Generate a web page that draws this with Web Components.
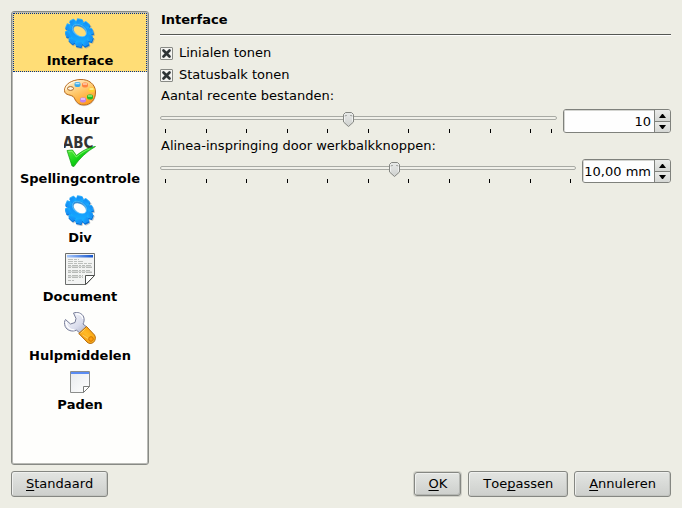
<!DOCTYPE html>
<html lang="nl">
<head>
<meta charset="utf-8">
<title>Instellingen</title>
<style>
html, body { margin: 0; }
body { background: #edede4; color: #000; font: 13px/16px "DejaVu Sans", sans-serif; font-kerning: none; }
</style>
</head>
<body>
<settings-dialog></settings-dialog>

<template id="t-dialog">
  <style>
    :host { display: flex; flex-direction: column; gap: 6px; min-height: 100vh; box-sizing: border-box; padding: 11px; }
    main { flex: 1; display: grid; grid-template-columns: 138px minmax(0, 1fr); gap: 11px; }
    footer { display: flex; gap: 6px; align-items: center; }
    .fill { flex: 1; }
    h1 { margin: 0 0 10px; padding: 1px 1px 6px; font-size: 13px; line-height: 16px; border-bottom: 1px solid #555753; box-shadow: 0 1px #fff; }
    .checks { display: grid; gap: 6px; margin-bottom: 5px; }
  </style>
  <main>
    <page-list>
      <page-item icon="gear" selected>Interface</page-item>
      <page-item icon="palette">Kleur</page-item>
      <page-item icon="spelling">Spellingcontrole</page-item>
      <page-item icon="gear">Div</page-item>
      <page-item icon="document">Document</page-item>
      <page-item icon="wrench">Hulpmiddelen</page-item>
      <page-item icon="folder">Paden</page-item>
    </page-list>
    <section>
      <h1>Interface</h1>
      <div class="checks">
        <check-option>Linialen tonen</check-option>
        <check-option>Statusbalk tonen</check-option>
      </div>
      <number-setting label="Aantal recente bestanden:" min="1" max="20" value="10" text="10" field="108" ticks="2,2,2,2,2,2,2,2,2,1"></number-setting>
      <number-setting label="Alinea-inspringing door werkbalkknoppen:" min="0" max="17.7" value="10" text="10,00 mm" field="89" ticks="1,1,1,1,1,1,1,1,1,1"></number-setting>
    </section>
  </main>
  <footer>
    <push-button><u>S</u>tandaard</push-button>
    <span class="fill"></span>
    <push-button kind="default"><u>O</u>K</push-button>
    <push-button>Toe<u>p</u>assen</push-button>
    <push-button><u>A</u>nnuleren</push-button>
  </footer>
</template>

<template id="t-list">
  <style>
    :host { display: block; box-sizing: border-box; background: #fefefc; border: 1px solid #888a85; border-radius: 3px; box-shadow: inset 0 0 0 1px #b9bab5; padding: 1px; }
    nav { display: flex; flex-direction: column; }
  </style>
  <nav><slot></slot></nav>
</template>

<template id="t-item">
  <style>
    :host { display: block; }
    button { display: flex; flex-direction: column; align-items: center; gap: 4px; width: 100%; margin: 0; padding: 4px 0 3px; border: 0; background: none; color: inherit; font: bold 13px/16px "DejaVu Sans", sans-serif; font-kerning: none; white-space: nowrap; }
    :host([selected]) button { background: #ffdd76; outline: 1px dotted #00308c; outline-offset: -1px; }
  </style>
  <button type="button"><page-icon></page-icon><slot></slot></button>
</template>

<template id="t-check">
  <style>
    :host { display: block; }
    label { display: flex; align-items: center; gap: 6px; }
    input { appearance: none; width: 13px; height: 13px; margin: 0; box-sizing: border-box; border: 1px solid #888a85; border-radius: 1px; background: #f8f8f6; }
    input:checked { background: #f4f4f1 url("data:image/svg+xml,%3Csvg xmlns='http://www.w3.org/2000/svg' viewBox='0 0 11 11'%3E%3Cpath d='M2.5 2.5L8.5 8.5M8.5 2.5L2.5 8.5' stroke='%232e3436' stroke-width='2.7' stroke-linecap='round'/%3E%3C/svg%3E"); }
  </style>
  <label><input type="checkbox" checked><span><slot></slot></span></label>
</template>

<template id="t-number">
  <style>
    :host { display: block; margin-bottom: 5px; }
    label { display: block; padding: 0 1px; margin-bottom: 5px; }
    .row { display: flex; gap: 6px; align-items: flex-start; }
    .scale { flex: 1; min-width: 0; padding-top: 2px; }
    .range { appearance: none; display: block; width: 100%; height: 14px; margin: 0; background: none; }
    .range::-webkit-slider-runnable-track { box-sizing: border-box; height: 4px; border: 1px solid #a8aaa4; border-radius: 2px; background: #f0f0e9; }
    .range::-webkit-slider-thumb { appearance: none; width: 11px; height: 15px; margin-top: -5px; border: 0; background: url("data:image/svg+xml,%3Csvg xmlns='http://www.w3.org/2000/svg' viewBox='0 0 11 15'%3E%3Cdefs%3E%3ClinearGradient id='g' x2='0' y2='1'%3E%3Cstop stop-color='%23e8eae8'/%3E%3Cstop offset='1' stop-color='%23cfd1cf'/%3E%3C/linearGradient%3E%3C/defs%3E%3Cpath d='M2.5 .5H8.5L10.5 2.5V10L5.5 14.5L.5 10V2.5Z' fill='url(%23g)' stroke='%23858782'/%3E%3Cpath d='M1.5 9.5V2.5M9.5 2.5V9.5' stroke='%23fff' stroke-opacity='.6'/%3E%3Cpath d='M2 4.5V3.5H4M7 3.5H9V4.5' fill='none' stroke='%23aaaca8'/%3E%3C/svg%3E"); }
    .ticks { display: flex; padding: 4px 5px 0; }
    .ticks i { height: 4px; min-width: 1px; box-sizing: border-box; border-left: 1px solid #000; }
    .ticks i:last-child { flex: 0 0 1px; }
    .spin { box-sizing: border-box; height: 24px; display: flex; border: 1px solid #7f817c; border-radius: 3px; overflow: hidden; background: #fefefe; }
    .spin input { flex: 1; min-width: 0; border: 0; margin: 0; padding: 1px 3px 0 1px; background: none; font: 13px/16px "DejaVu Sans", sans-serif; font-kerning: none; text-align: right; box-shadow: inset 1px 1px #d4d5d1; outline: 0; }
    .arrows { width: 16px; display: grid; grid-template-rows: 1fr 1fr; box-sizing: border-box; border-left: 1px solid #7f817c; }
    .arrows button { display: flex; align-items: center; justify-content: center; margin: 0; padding: 0; border: 0; background: linear-gradient(#eaebe9, #d5d7d4); min-height: 0; }
    .arrows button + button { border-top: 1px solid #7f817c; }
    svg { display: block; width: 7px; height: 4px; }
  </style>
  <label for="field"></label>
  <div class="row">
    <div class="scale">
      <input class="range" type="range" step="any">
      <div class="ticks"></div>
    </div>
    <div class="spin">
      <input id="field" type="text">
      <div class="arrows">
        <button type="button" aria-label="Verhogen"><svg viewBox="0 0 7 4"><path d="M0 4L3 0H4L7 4Z"/></svg></button>
        <button type="button" aria-label="Verlagen"><svg viewBox="0 0 7 4"><path d="M0 0L3 4H4L7 0Z"/></svg></button>
      </div>
    </div>
  </div>
</template>

<template id="t-button">
  <style>
    :host { display: block; }
    button { display: block; box-sizing: border-box; height: 26px; margin: 0; padding: 0 14px; border: 1px solid #858782; border-radius: 3px; background: linear-gradient(#e3e5e2, #cdcfcc); box-shadow: inset 1px 1px #eff0ee, inset -1px -1px #c3c5c1; color: #000; font: 13px/16px "DejaVu Sans", sans-serif; font-kerning: none; white-space: nowrap; }
    :host([kind="default"]) button { height: 24px; margin: 1px; padding: 0 13px; box-shadow: 0 0 0 1px #cfcfc7, inset 1px 1px #eff0ee, inset -1px -1px #b5b7b3; }
    ::slotted(u) { text-decoration: underline; text-decoration-skip-ink: none; text-underline-offset: 2px; }
  </style>
  <button type="button"><slot></slot></button>
</template>

<script>
const teeth = [0, 36, 72, 108, 144, 180, 216, 252, 288, 324]
  .map(a => `<path d="M-3.8 -10L-3 -14.4Q-2.800 -15 -2 -15H2Q2.800 -15 3 -14.400L3.8 -10Z" transform="rotate(${a})"/>`).join('');
const wheel = `<circle r="12.6"/>${teeth}`;

const ICONS = {
  gear: `<svg width="32" height="32" viewBox="0 0 32 32"><defs>
    <linearGradient id="a" x1="0" y1="0" x2="1" y2="1"><stop stop-color="#1689ef"/><stop offset=".55" stop-color="#159bfc"/><stop offset="1" stop-color="#18b8ff"/></linearGradient>
    <linearGradient id="b" x2="1" y2="1"><stop stop-color="#1476c8"/><stop offset="1" stop-color="#a5dcf8"/></linearGradient>
    <mask id="m" maskUnits="userSpaceOnUse" x="0" y="0" width="32" height="32"><path d="M0 0H32V32H0Z" fill="#fff"/><ellipse cx="15.8" cy="14.3" rx="6.8" ry="4.1" transform="rotate(33 15.8 14.3)" fill="#000"/></mask></defs>
    <g mask="url(#m)">
      <g transform="translate(16.4 17.6) rotate(43) scale(1.02 .9)" fill="#7d8790" opacity=".45">${wheel}</g>
      <g transform="translate(15.5 16.8) rotate(43) scale(1.02 .88)" fill="#0872d8">${wheel}</g>
      <g transform="translate(15.1 15.3) rotate(43) scale(1 .87)" fill="#35b5ff">${wheel}</g>
      <g transform="translate(15.3 15.9) rotate(43) scale(.97 .84)" fill="url(#a)">${wheel}</g>
      <ellipse cx="15.5" cy="13.5" rx="7.9" ry="5.4" transform="rotate(33 15.5 13.5)" fill="url(#b)" stroke="#4cc0ff" stroke-width=".7"/>
    </g></svg>`,
  palette: `<svg width="32" height="32" viewBox="0 0 32 32"><defs>
    <linearGradient id="a" x1=".2" y1="0" x2=".7" y2="1"><stop stop-color="#fff0cf"/><stop offset=".5" stop-color="#ffc768"/><stop offset="1" stop-color="#ff9a1c"/></linearGradient></defs>
    <path d="M17 4C25 3 32 9 32 17C32 25 27 30.300 20 30.300C13 30.300 11.500 25.500 9.500 22C8 19.500 1.500 20 1 14.500C.8 8 9 4.500 17 4Z" fill="#888" opacity=".25"/>
    <path d="M16 3.500C25 3 31.500 8.500 31.500 16C31.500 24 26.500 29 20 29C13.500 29 12 25 10 21.500C8 18 .5 20 .5 14.500C.5 8 8 4 16 3.500Z" fill="url(#a)" stroke="#b8681b"/>
    <path d="M14.500 5C8 5.500 2 9 1.800 14" fill="none" stroke="#fff6df" stroke-width="1.200"/>
    <ellipse cx="6.500" cy="12.500" rx="3" ry="1.900" fill="#fff5e2" stroke="#a66526"/>
    <rect x="10.500" y="6" width="6" height="5" rx="2" fill="#39a9e8"/><path d="M11.500 7.500H15.500" stroke="#bce6ff" stroke-width="1.500"/>
    <rect x="18" y="6.500" width="6" height="5" rx="2" fill="#ff8442"/><path d="M19 8H23" stroke="#ffd1b5" stroke-width="1.500"/>
    <rect x="24.500" y="11.500" width="6" height="5" rx="2" fill="#ffd12e"/><path d="M25.500 13H29.500" stroke="#fff1a8" stroke-width="1.500"/>
    <rect x="23" y="18.500" width="6" height="5" rx="2" fill="#25bd22"/><path d="M24 20H28" stroke="#9aec8e" stroke-width="1.500"/>
    <rect x="16" y="21.500" width="6" height="5" rx="2" fill="#c182ea"/><path d="M17 23H21" stroke="#ebcdfa" stroke-width="1.500"/></svg>`,
  spelling: `<svg width="32" height="32" viewBox="0 0 32 32"><defs>
    <linearGradient id="a" x2="1" y2="1"><stop stop-color="#6cf14a"/><stop offset=".5" stop-color="#12d315"/><stop offset="1" stop-color="#087c08"/></linearGradient></defs>
    <text x="14" y="13" text-anchor="middle" font-family="DejaVu Sans Condensed, DejaVu Sans, sans-serif" font-size="15" fill="#333">ABC</text>
    <path d="M3 15.500L8.500 15L12.500 20.500C18 16 24 12.500 31.500 11.500C22.500 16.500 15.500 23.500 10 31.500L8 31Z" fill="url(#a)" stroke="#0b9c0c" stroke-width=".7"/>
    <path d="M4.500 16.500L8 16.200L12.300 22C16.500 18.500 21 15.500 26 13.800" fill="none" stroke="#a4f98a" stroke-width=".7"/></svg>`,
  document: `<svg width="32" height="32" viewBox="0 0 32 32"><defs>
    <linearGradient id="a"><stop stop-color="#a9caff"/><stop offset="1" stop-color="#1454cb"/></linearGradient></defs>
    <path d="M1.500 .5H30.500V22.500L22 31.500H1.500Z" fill="#f3f4f3" stroke="#6c6e6c"/>
    <path d="M3 2H29V4.500H3Z" fill="url(#a)"/>
    <path d="M4 6.500H15M4 8.500H19M4 10.500H28" stroke="#bcbfbc" stroke-dasharray="5 1 3 1"/>
    <path d="M4 12.500H27M4 14.500H28M4 17.500H26M4 19.500H28M4 22.500H19M4 24.500H19M4 27.500H10" stroke="#b8bbb8" stroke-dasharray="3 1 6 1 2 1"/>
    <path d="M4 13.500H28M4 18.500H28M4 23.500H19" stroke="#d6d8d6"/>
    <path d="M21.500 31.500V22.500H30.500Z" fill="#fff" stroke="#4d4f4d"/></svg>`,
  wrench: `<svg width="32" height="32" viewBox="0 0 32 32"><defs>
    <linearGradient id="a" x2="1" y2="1"><stop stop-color="#fff"/><stop offset=".6" stop-color="#d9dcec"/><stop offset="1" stop-color="#9ea4bd"/></linearGradient>
    <linearGradient id="b" x1="0" y1="1" x2="1" y2="0"><stop stop-color="#ef8200"/><stop offset=".5" stop-color="#ffba26"/><stop offset="1" stop-color="#f59200"/></linearGradient></defs>
    <path d="M9.500 1C13 -.3 18 .8 19.700 5C20.600 8 20 10 19 12L24 16L17 22L12.500 18.200C8 20.200 3 18.500 1.200 14.500C.2 12 .3 9 1.500 7.500L6.500 12L11 10.500L12 6.500Z" fill="url(#a)" stroke="#777d98"/>
    <path d="M2 10C2.500 14 5 18 10.500 17.800M12 2C16 1.500 18.500 4 18.800 7" fill="none" stroke="#fff" stroke-width="1.200"/>
    <path d="M22.500 14.500L30.500 23C32 25 31.500 28.500 29.500 30.300C27.500 32 24.500 31.800 23 30L14.800 21.500Z" fill="url(#b)" stroke="#b36a0c"/>
    <path d="M16.500 21.500L21.500 16.500M18.500 23L28.500 29" stroke="#ffe08b" opacity=".6"/>
    <circle cx="27" cy="27" r="2.300" fill="#ff9d0b" stroke="#cf7600"/></svg>`,
  folder: `<svg width="22" height="22" viewBox="0 0 22 22"><defs>
    <linearGradient id="a" x2="1" y2="1"><stop stop-color="#e7eaec"/><stop offset="1" stop-color="#fff"/></linearGradient></defs>
    <path d="M1.500 .5H20.500V15.500L14.500 21.500H1.500Z" fill="url(#a)" stroke="#8c8e8c"/>
    <path d="M2 1H20V3H2Z" fill="#5a8cf3"/>
    <path d="M14.500 21.500V15.500H20.500Z" fill="#fff" stroke="#7a7c7a"/></svg>`
};

class Base extends HTMLElement {
  constructor() {
    super();
    const root = this.attachShadow({ mode: 'open' });
    const id = this.constructor.template;
    if (id) root.append(document.getElementById(id).content.cloneNode(true));
  }
}

customElements.define('page-icon', class extends Base {
  static observedAttributes = ['name'];
  attributeChangedCallback() {
    this.shadowRoot.innerHTML = `<style>:host { display: block; } svg { display: block; }</style>${ICONS[this.getAttribute('name')] || ''}`;
  }
});
customElements.define('page-item', class extends Base {
  static template = 't-item';
  connectedCallback() {
    this.shadowRoot.querySelector('page-icon').setAttribute('name', this.getAttribute('icon'));
  }
});
customElements.define('page-list', class extends Base { static template = 't-list'; });
customElements.define('check-option', class extends Base { static template = 't-check'; });
customElements.define('push-button', class extends Base { static template = 't-button'; });
customElements.define('number-setting', class extends Base {
  static template = 't-number';
  connectedCallback() {
    const $ = s => this.shadowRoot.querySelector(s);
    const label = this.getAttribute('label');
    $('label').textContent = label;
    const range = $('.range');
    range.min = this.getAttribute('min');
    range.max = this.getAttribute('max');
    range.value = this.getAttribute('value');
    range.setAttribute('aria-label', label);
    $('#field').value = this.getAttribute('text');
    $('.spin').style.width = this.getAttribute('field') + 'px';
    $('.ticks').innerHTML = this.getAttribute('ticks').split(',').map(n => `<i style="flex:${n} 1 0px"></i>`).join('') + '<i></i>';
  }
});
customElements.define('settings-dialog', class extends Base { static template = 't-dialog'; });
</script>
</body>
</html>
